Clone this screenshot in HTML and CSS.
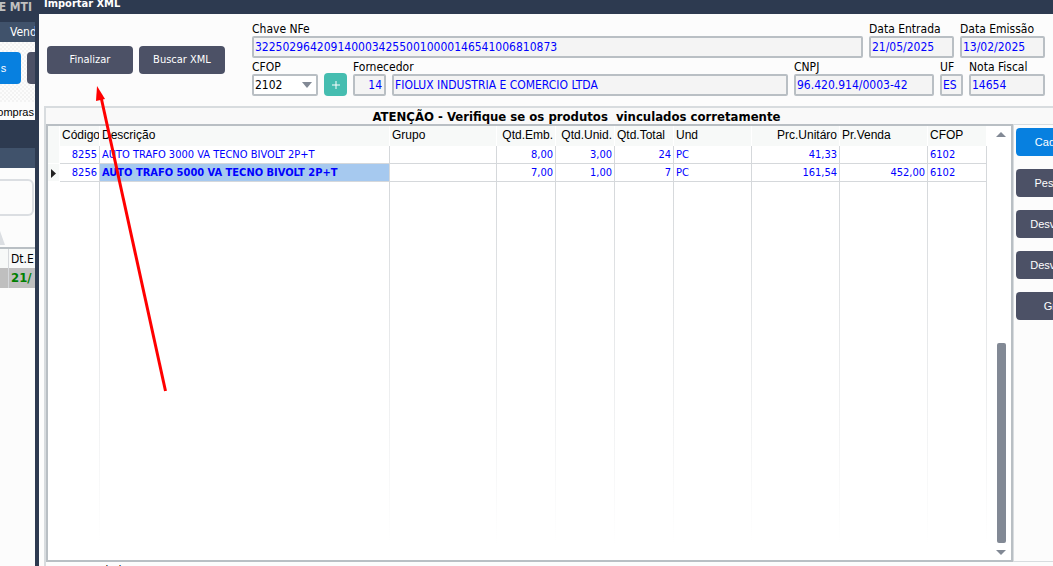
FILE: index.html
```html
<!DOCTYPE html>
<html lang="pt-BR">

<head>
  <meta charset="UTF-8">
  <meta name="viewport" content="width=device-width, initial-scale=1.0">
  <title>Importar XML</title>
  <link rel="stylesheet" href="styles.css">
</head>

<body>

  <!-- Tela de compras, atrás da janela -->
  <div class="backdrop">
    <div class="back-title">TE MTI</div>
    <div class="back-menu">Vend</div>
    <div class="back-tools">
      <button class="btn primary back-btn-left">s</button>
      <button class="btn back-btn-right" aria-label="Opções"></button>
    </div>
    <div class="back-caption">ompras</div>
    <div class="back-bar"></div>
    <div class="back-menu"></div>
    <div class="back-filter">
      <div class="back-box"></div>
      <div class="back-tab"></div>
    </div>
    <div class="back-head"><span>Dt.E</span></div>
    <div class="back-row"><span>21/</span></div>
  </div>

  <div class="window">
    <h1 class="titlebar">Importar XML</h1>

    <div class="top">
      <div class="actions">
        <button class="btn">Finalizar</button>
        <button class="btn">Buscar XML</button>
      </div>

      <form class="form">
        <div class="form-row">
          <div class="field grow">
            <label for="chave">Chave NFe</label>
            <input type="text" id="chave" value="32250296420914000342550010000146541006810873" readonly>
          </div>
          <div class="field date">
            <label for="entrada">Data Entrada</label>
            <input type="text" id="entrada" value="21/05/2025" readonly>
          </div>
          <div class="field date">
            <label for="emissao">Data Emissão</label>
            <input type="text" id="emissao" value="13/02/2025" readonly>
          </div>
        </div>

        <div class="form-row">
          <div class="field cfop">
            <label for="cfop">CFOP</label>
            <div class="select-box">
              <select id="cfop">
                <option>2102</option>
              </select>
            </div>
          </div>
          <button type="button" class="btn-add" aria-label="Adicionar CFOP">
            <svg width="10" height="10" viewBox="0 0 10 10"><path d="M5 1v8M1 5h8" stroke="#fff" stroke-width="1"/></svg>
          </button>
          <div class="field code">
            <label for="fornecedor">Fornecedor</label>
            <input type="text" id="fornecedor" value="14" readonly>
          </div>
          <div class="field grow">
            <input type="text" aria-label="Nome do fornecedor" value="FIOLUX INDUSTRIA E COMERCIO LTDA" readonly>
          </div>
          <div class="field cnpj">
            <label for="cnpj">CNPJ</label>
            <input type="text" id="cnpj" value="96.420.914/0003-42" readonly>
          </div>
          <div class="field uf">
            <label for="uf">UF</label>
            <input type="text" id="uf" value="ES" readonly>
          </div>
          <div class="field nota">
            <label for="nota">Nota Fiscal</label>
            <input type="text" id="nota" value="14654" readonly>
          </div>
        </div>
      </form>
    </div>

    <div class="products">
      <h2 class="warning">ATENÇÃO - Verifique se os produtos&nbsp; vinculados corretamente</h2>

      <div class="products-body">
        <div class="grid">
          <div class="grid-table">
            <table>
              <colgroup>
                <col class="c-mark">
                <col class="c-codigo">
                <col>
                <col class="c-grupo">
                <col class="c-qtd">
                <col class="c-qtd">
                <col class="c-qtd">
                <col class="c-und">
                <col class="c-preco">
                <col class="c-preco">
                <col class="c-qtd">
              </colgroup>
              <thead>
                <tr>
                  <th></th>
                  <th>Código</th>
                  <th>Descrição</th>
                  <th>Grupo</th>
                  <th class="num">Qtd.Emb.</th>
                  <th class="num">Qtd.Unid.</th>
                  <th>Qtd.Total</th>
                  <th>Und</th>
                  <th class="num">Prc.Unitáro</th>
                  <th>Pr.Venda</th>
                  <th>CFOP</th>
                </tr>
              </thead>
              <tbody>
                <tr>
                  <td class="mark"></td>
                  <td class="num">8255</td>
                  <td>AUTO TRAFO 3000 VA TECNO BIVOLT 2P+T</td>
                  <td></td>
                  <td class="num">8,00</td>
                  <td class="num">3,00</td>
                  <td class="num">24</td>
                  <td>PC</td>
                  <td class="num">41,33</td>
                  <td></td>
                  <td>6102</td>
                </tr>
                <tr>
                  <td class="mark"><svg width="5" height="9" viewBox="0 0 5 9"><path d="M0 0l5 4.500-5 4.500z" fill="#222"/></svg></td>
                  <td class="num">8256</td>
                  <td class="selected">AUTO TRAFO 5000 VA TECNO BIVOLT 2P+T</td>
                  <td></td>
                  <td class="num">7,00</td>
                  <td class="num">1,00</td>
                  <td class="num">7</td>
                  <td>PC</td>
                  <td class="num">161,54</td>
                  <td class="num">452,00</td>
                  <td>6102</td>
                </tr>
                <tr class="filler">
                  <td class="blank"></td>
                  <td></td>
                  <td></td>
                  <td></td>
                  <td></td>
                  <td></td>
                  <td></td>
                  <td></td>
                  <td></td>
                  <td></td>
                  <td></td>
                </tr>
              </tbody>
            </table>
          </div>
          <div class="scrollbar">
            <div class="arrow-up"></div>
            <div class="thumb"></div>
            <div class="arrow-down"></div>
          </div>
        </div>

        <div class="side">
          <button class="btn primary">Cadastrar</button>
          <button class="btn">Pesquisar</button>
          <button class="btn">Desvincular</button>
          <button class="btn">Desvincular</button>
          <button class="btn">Grade</button>
        </div>
      </div>

      <div class="footer">Margem de lucro</div>
    </div>
  </div>

  <!-- Seta apontando para o botão Finalizar -->
  <svg class="pointer" width="180" height="400" viewBox="0 0 180 400">
    <path d="M101 97L165.500 391" stroke="#f00" stroke-width="3"/>
    <path d="M97 86L96 101L105 99z" fill="#f00"/>
  </svg>

</body>

</html>
```
FILE: styles.css
```css
* {
  box-sizing: border-box;
}

body {
  margin: 0;
  height: 100vh;
  display: flex;
  overflow: hidden;
  background: #fcfcfc;
  font-family: "DejaVu Sans Condensed", "DejaVu Sans", sans-serif;
  font-size: 12px;
  line-height: 14px;
  color: #000;
}

input,
select,
button {
  font-family: inherit;
  font-size: inherit;
  line-height: inherit;
}

.btn {
  width: 86px;
  height: 28px;
  padding: 0;
  border: none;
  border-radius: 4px;
  background: #4c5166;
  color: #fff;
  font-size: 11px;
}

.primary {
  background: #0780e0;
}

/* tela de trás */
.backdrop {
  width: 35px;
  flex: none;
  overflow: hidden;
  white-space: nowrap;
}

.back-title {
  height: 22px;
  padding-right: 3px;
  display: flex;
  justify-content: flex-end;
  background: #2d3a50;
  color: #c0c0c0;
  font-weight: bold;
}

.back-menu {
  height: 20px;
  padding: 3px 0 0 10px;
  background: #40526b;
  color: #fff;
}

.back-tools {
  height: 60px;
  padding-top: 10px;
  display: flex;
  gap: 6px;
  background: repeating-conic-gradient(#f3f3f3 0 25%, #fcfcfc 0 50%) 0 0 / 4px 4px;
}

.back-tools .btn {
  height: 32px;
  flex: none;
}

.back-tools .back-btn-left {
  width: 21px;
  padding-right: 14px;
  border-radius: 0 4px 4px 0;
  font-family: "Liberation Sans", Arial, sans-serif;
}

.back-caption {
  height: 18px;
  padding: 3px 1px 0 0;
  display: flex;
  justify-content: flex-end;
  font-family: "Liberation Sans", Arial, sans-serif;
  font-size: 11px;
}

.back-bar {
  height: 28px;
  background: #2d3a50;
}

.back-filter {
  height: 79px;
  padding-top: 11px;
}

.back-box {
  width: 34px;
  height: 37px;
  border: 2px solid #dbdee2;
  border-left: none;
  border-radius: 0 6px 6px 0;
}

.back-tab {
  width: 5px;
  height: 14px;
  margin-top: 15px;
  background: #dbdee2;
  clip-path: polygon(0 0, 100% 100%, 0 100%);
}

.back-head,
.back-row {
  height: 20px;
  padding-left: 8px;
}

.back-head {
  height: 21px;
  border-top: 2px solid #b9bfc4;
  background: #f7f9f8;
}

.back-head span,
.back-row span {
  display: block;
  height: 100%;
  padding: 3px 0 0 2px;
  border-left: 1px solid #d5d8db;
}

.back-row {
  background: #bfbfbf;
  color: #008000;
  font-size: 13px;
  font-weight: bold;
}

/* janela: continua além da borda direita da tela */
.window {
  flex: 1;
  min-width: 0;
  margin-right: -54px;
  display: flex;
  flex-direction: column;
  border-left: 4px solid #2d3a50;
}

.titlebar {
  margin: 0;
  height: 14px;
  padding-left: 5px;
  background: #2d3a50;
  color: #fff;
  font-size: 11px;
  line-height: 8px;
}

.top {
  display: flex;
  gap: 27px;
  padding: 8px 62px 10px 8px;
}

.actions {
  display: flex;
  gap: 6px;
  padding-top: 24px;
}

.form {
  flex: 1;
  min-width: 0;
  display: flex;
  flex-direction: column;
  gap: 2px;
}

.form-row {
  display: flex;
  align-items: flex-end;
  gap: 6px;
}

.field {
  flex: none;
  display: flex;
  flex-direction: column;
}

.field.grow {
  flex: 1;
  min-width: 0;
}

.field label {
  white-space: nowrap;
}

.field input,
.field select {
  width: 100%;
  height: 22px;
  padding: 0 1px;
  border: 2px solid #b9bfc4;
  border-radius: 2px;
  background: #f4f4f4;
  color: #00f;
}

.date {
  width: 85px;
}

.cfop {
  width: 66px;
}

.code {
  width: 33px;
}

.field.code input {
  padding-right: 2px;
  text-align: right;
}

.cnpj {
  width: 140px;
}

.uf {
  width: 23px;
}

.nota {
  width: 76px;
}

.select-box {
  position: relative;
}

.field select {
  display: block;
  appearance: none;
  background: #fff;
  color: #000;
}

.select-box::after {
  content: "";
  position: absolute;
  top: 8px;
  right: 6px;
  border: 5px solid transparent;
  border-top: 6px solid #828995;
  border-bottom: none;
  pointer-events: none;
}

.btn-add {
  width: 23px;
  height: 23px;
  padding: 0;
  display: flex;
  align-items: center;
  justify-content: center;
  border: none;
  border-radius: 4px;
  background: #45bdb0;
}

/* produtos */
.products {
  flex: 1;
  min-height: 0;
  margin-left: 5px;
  display: flex;
  flex-direction: column;
  border: 2px solid #d8dcdf;
  border-right: none;
  border-bottom: none;
}

.warning {
  margin: 0;
  height: 16px;
  background: #f9f9f9;
  font-size: 13px;
  line-height: 17px;
  text-align: center;
}

.products-body {
  flex: 1;
  min-height: 0;
  display: flex;
}

.grid {
  flex: 1;
  min-width: 0;
  display: flex;
  border: 2px solid #b9bfc4;
  background: #fff;
}

.grid-table {
  flex: 1;
  min-width: 0;
}

table {
  width: 100%;
  height: 100%;
  table-layout: fixed;
  border-collapse: separate;
  border-spacing: 0;
}

.c-mark {
  width: 12px;
}

.c-codigo {
  width: 40px;
}

.c-grupo {
  width: 107px;
}

.c-qtd {
  width: 59px;
}

.c-und {
  width: 78px;
}

.c-preco {
  width: 88px;
}

th,
td {
  height: 18px;
  padding: 1px 2px 0;
  overflow: hidden;
  white-space: nowrap;
  text-align: left;
  border-right: 1px solid #d5d8db;
}

th {
  height: 20px;
  padding: 0 2px 2px;
  background: #f7f9f8;
  border-right-color: #fff;
  font-family: "Liberation Sans", Arial, sans-serif;
  font-size: 12px;
  font-weight: normal;
}

td {
  border-bottom: 1px solid #d5d8db;
  color: #00f;
  font-size: 11px;
}

.num {
  text-align: right;
}

.selected {
  background: #a6c9ef;
  font-weight: bold;
}

.mark {
  background: #f7f9f8;
  border-color: #fff;
}

.mark svg {
  display: block;
  margin-left: 1px;
}

.filler td {
  height: auto;
  border: none;
  background: linear-gradient(#d5d8db, #fff 96%) right / 1px 100% no-repeat;
}

.filler .blank {
  background: none;
}

.scrollbar {
  width: 24px;
  flex: none;
  padding: 6px 5px 5px 9px;
  display: flex;
  flex-direction: column;
  align-items: center;
}

.arrow-up {
  border: 5px solid transparent;
  border-top: none;
  border-bottom: 5px solid #828995;
}

.thumb {
  width: 9px;
  height: 200px;
  margin-top: auto;
  border-radius: 2px;
  background: #828995;
}

.arrow-down {
  margin-top: 7px;
  border: 5px solid transparent;
  border-bottom: none;
  border-top: 5px solid #828995;
}

.side {
  width: 94px;
  flex: none;
  padding: 3px 0 0 2px;
  display: flex;
  flex-direction: column;
  gap: 13px;
  border: 1px solid #d8dcdf;
  border-right: none;
}

.side .btn {
  font-family: "Liberation Sans", Arial, sans-serif;
}

.footer {
  height: 4px;
  padding-left: 8px;
  line-height: 18px;
}

.pointer {
  position: absolute;
  top: 0;
  left: 0;
  pointer-events: none;
}
```
